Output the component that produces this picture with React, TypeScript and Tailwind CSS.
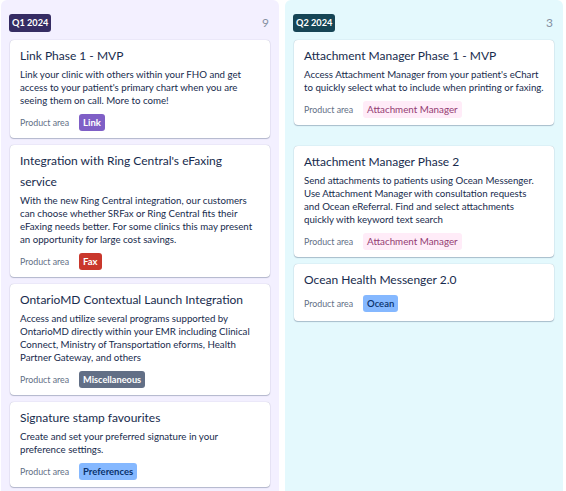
import React from "react";

type Tag = { label: string; cls: string };
type Card = { title: string; body?: string; tag: Tag; spaced?: boolean };
type Column = {
  label: string;
  count: number;
  bg: string;
  badge: string;
  cards: Card[];
};

const TAGS: Record<string, Tag> = {
  link: { label: "Link", cls: "bg-[#7f5fc6] text-white font-bold text-[9.5px]" },
  fax: { label: "Fax", cls: "bg-[#c9372c] text-white font-bold text-[9.5px]" },
  misc: { label: "Miscellaneous", cls: "bg-[#626f86] text-white font-bold text-[9.2px]" },
  prefs: { label: "Preferences", cls: "bg-[#85b8ff] text-[#09326c] font-bold text-[9.5px]" },
  attach: { label: "Attachment Manager", cls: "bg-[#ffecf8] text-[#943d73] font-normal text-[9.8px]" },
  ocean: { label: "Ocean", cls: "bg-[#85b8ff] text-[#09326c] font-semibold text-[9.5px]" },
};

const COLUMNS: Column[] = [
  {
    label: "Q1 2024",
    count: 9,
    bg: "bg-[#f3f0ff]",
    badge: "bg-[#352c63]",
    cards: [
      {
        title: "Link Phase 1 - MVP",
        body: "Link your clinic with others within your FHO and get access to your patient's primary chart when you are seeing them on call. More to come!",
        tag: TAGS.link,
      },
      {
        title: "Integration with Ring Central's eFaxing service",
        body: "With the new Ring Central integration, our customers can choose whether SRFax or Ring Central fits their eFaxing needs better. For some clinics this may present an opportunity for large cost savings.",
        tag: TAGS.fax,
      },
      {
        title: "OntarioMD Contextual Launch Integration",
        body: "Access and utilize several programs supported by OntarioMD directly within your EMR including Clinical Connect, Ministry of Transportation eforms, Health Partner Gateway, and others",
        tag: TAGS.misc,
      },
      {
        title: "Signature stamp favourites",
        body: "Create and set your preferred signature in your preference settings.",
        tag: TAGS.prefs,
      },
    ],
  },
  {
    label: "Q2 2024",
    count: 3,
    bg: "bg-[#e4f9fd]",
    badge: "bg-[#164555]",
    cards: [
      {
        title: "Attachment Manager Phase 1 - MVP",
        body: "Access Attachment Manager from your patient's eChart to quickly select what to include when printing or faxing.",
        tag: TAGS.attach,
      },
      {
        title: "Attachment Manager Phase 2",
        body: "Send attachments to patients using Ocean Messenger. Use Attachment Manager with consultation requests and Ocean eReferral. Find and select attachments quickly with keyword text search",
        tag: TAGS.attach,
        spaced: true,
      },
      {
        title: "Ocean Health Messenger 2.0",
        tag: TAGS.ocean,
      },
    ],
  },
];

function IdeaCard({ card }: { card: Card }) {
  return (
    <div
      className={`rounded-[4px] bg-white px-[10px] pt-[5px] shadow-[0_1px_1px_rgba(9,30,66,0.25),0_0_1px_rgba(9,30,66,0.31)] ${
        card.spaced ? "mt-[21px]" : "mt-[7px]"
      } ${card.body ? "pb-[7px]" : "pb-[9px]"}`}
    >
      <div className="text-[12px] leading-[21px] text-[#172b4d]">{card.title}</div>
      {card.body && (
        <p className="mt-[2px] text-[9.7px] leading-[13px] text-[#172b4d]">{card.body}</p>
      )}
      <div className={`flex items-center gap-[10px] ${card.body ? "mt-[7px]" : "mt-[5px]"}`}>
        <span className="text-[8.8px] text-[#626f86]">Product area</span>
        <span className={`h-[17px] rounded-[3px] px-[4px] leading-[17px] ${card.tag.cls}`}>
          {card.tag.label}
        </span>
      </div>
    </div>
  );
}

function BoardColumn({ col }: { col: Column }) {
  return (
    <div className={`w-[278px] shrink-0 rounded-t-[6px] px-[9px] ${col.bg}`}>
      <div className="flex h-[32px] items-end justify-between pr-[1px]">
        <span
          className={`-ml-[1px] h-[18px] rounded-[3px] px-[3px] text-[9.2px] font-bold leading-[18px] text-white ${col.badge}`}
        >
          {col.label}
        </span>
        <span className="mb-[1px] text-[12px] leading-[16px] text-[#8590a2]">{col.count}</span>
      </div>
      <div className="pt-[1px]">
        {col.cards.map((c) => (
          <IdeaCard key={c.title} card={c} />
        ))}
      </div>
    </div>
  );
}

export default function App() {
  return (
    <div className="flex h-[491px] w-[566px] gap-[6px] overflow-hidden bg-white pl-[1px] font-['Lato',sans-serif]">
      {COLUMNS.map((col) => (
        <BoardColumn key={col.label} col={col} />
      ))}
    </div>
  );
}
